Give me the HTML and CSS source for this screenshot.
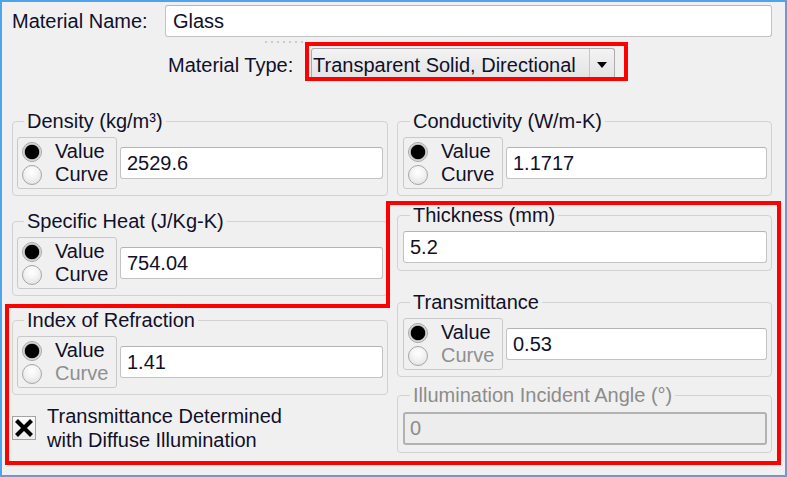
FILE: index.html
```html
<!DOCTYPE html>
<html>
<head>
<meta charset="utf-8">
<link rel="stylesheet" href="styles.css">
</head>
<body>
<div class="window">
  <div class="row1">
    <span class="label name-label">Material Name:</span>
    <div class="input name-input">Glass</div>
  </div>
  <div class="grip"></div>
  <div class="row2">
    <span class="label type-label">Material Type:</span>
    <div class="hl">
      <div class="select">
        <span class="select-text">Transparent Solid, Directional</span>
        <span class="select-btn"><svg width="10" height="6" viewBox="0 0 10 6"><path d="M0 0H10L5 6Z" fill="#000"/></svg></span>
      </div>
    </div>
  </div>

  <div class="grid">
    <div class="col col-left">
      <fieldset class="group g-density">
        <legend>Density (kg/m³)</legend>
        <div class="frow">
          <div class="radios">
            <div class="opt"><span class="radio on"></span>Value</div>
            <div class="opt"><span class="radio"></span>Curve</div>
          </div>
          <div class="input">2529.6</div>
        </div>
      </fieldset>
      <fieldset class="group g-heat">
        <legend>Specific Heat (J/Kg-K)</legend>
        <div class="frow">
          <div class="radios">
            <div class="opt"><span class="radio on"></span>Value</div>
            <div class="opt"><span class="radio"></span>Curve</div>
          </div>
          <div class="input">754.04</div>
        </div>
      </fieldset>
      <fieldset class="group g-index">
        <legend>Index of Refraction</legend>
        <div class="frow">
          <div class="radios">
            <div class="opt"><span class="radio on"></span>Value</div>
            <div class="opt disabled"><span class="radio"></span>Curve</div>
          </div>
          <div class="input">1.41</div>
        </div>
      </fieldset>
      <div class="checkrow">
        <span class="check"><svg width="22" height="22" viewBox="0 0 22 22"><path d="M3.5 3.5L18.5 18.5M18.5 3.5L3.5 18.5" stroke="#000" stroke-width="4.2" fill="none"/></svg></span>
        <span class="checktext">Transmittance Determined<br>with Diffuse Illumination</span>
      </div>
    </div>

    <div class="col col-right">
      <fieldset class="group g-cond">
        <legend>Conductivity (W/m-K)</legend>
        <div class="frow">
          <div class="radios">
            <div class="opt"><span class="radio on"></span>Value</div>
            <div class="opt"><span class="radio"></span>Curve</div>
          </div>
          <div class="input">1.1717</div>
        </div>
      </fieldset>
      <fieldset class="group g-thick">
        <legend>Thickness (mm)</legend>
        <div class="input">5.2</div>
      </fieldset>
      <fieldset class="group g-trans">
        <legend>Transmittance</legend>
        <div class="frow">
          <div class="radios">
            <div class="opt"><span class="radio on"></span>Value</div>
            <div class="opt disabled"><span class="radio"></span>Curve</div>
          </div>
          <div class="input">0.53</div>
        </div>
      </fieldset>
      <fieldset class="group g-illum disabled-group">
        <legend>Illumination Incident Angle (°)</legend>
        <div class="input input-disabled">0</div>
      </fieldset>
    </div>
  </div>

  <svg class="annot" width="787" height="477" viewBox="0 0 787 477">
    <path d="M7 306H388V203H779V463H7Z" fill="none" stroke="#ff0000" stroke-width="4"/>
  </svg>
</div>
</body>
</html>
```

FILE: styles.css
```css
html, body {
  margin: 0;
  padding: 0;
  background: #f0f0f0;
}

body {
  font-family: "Liberation Sans", Arial, sans-serif;
  font-size: 20px;
  color: #10102a;
}

.window {
  position: relative;
  box-sizing: border-box;
  width: 787px;
  height: 477px;
  border: 2px solid #4ea3ec;
  background: #f0f0f0;
  overflow: hidden;
}

.label {
  line-height: 22px;
  white-space: nowrap;
}

.input {
  box-sizing: border-box;
  height: 32px;
  background: #ffffff;
  border: 1px solid #c3c3c3;
  border-top-color: #b4b4b4;
  border-radius: 3px;
  padding: 0 6px;
  line-height: 30px;
  white-space: nowrap;
  overflow: hidden;
}

/* top rows */
.row1 {
  display: flex;
  align-items: center;
  padding: 3px 13px 0 10px;
}

.name-label {
  flex: 0 0 153px;
}

.name-input {
  flex: 1;
  padding-left: 7px;
}

.grip {
  width: 40px;
  height: 2px;
  margin: 4px 0 0 263px;
  background: repeating-linear-gradient(90deg, #cacaca 0 2px, transparent 2px 6px);
}

.row2 {
  display: flex;
  align-items: flex-start;
  margin-top: -1px;
  padding-left: 166px;
}

.type-label {
  flex: 0 0 137px;
  margin-top: 12px;
}

.hl {
  border: 4px solid #ff0000;
  padding: 2px 9px 0 2px;
}

.select {
  box-sizing: border-box;
  width: 304px;
  height: 29px;
  display: flex;
  border: 1px solid #acacac;
  border-bottom: none;
  border-radius: 3px 3px 0 0;
  background: linear-gradient(#f3f3f3, #e4e4e4);
}

.select-text {
  flex: 1;
  padding: 5px 0 0 1px;
  line-height: 22px;
  white-space: nowrap;
}

.select-btn {
  box-sizing: border-box;
  width: 25px;
  border-left: 1px solid #c6c6c6;
  display: flex;
  justify-content: center;
  padding-top: 13px;
}

.select-btn svg {
  display: block;
}

/* grid of groups */
.grid {
  display: grid;
  grid-template-columns: 376px 375px;
  column-gap: 9px;
  padding-left: 10px;
  margin-top: 30px;
}

.col {
  display: flex;
  flex-direction: column;
}

.group {
  margin: 0;
  min-width: 0;
  border: 1px solid #d2d2d2;
  border-radius: 4px;
  padding: 6px 4px 6px 4px;
}

.col-right .group {
  padding-left: 5px;
}

.group legend {
  padding: 0 3px;
  margin-left: 7px;
  line-height: 20px;
  white-space: nowrap;
}

.frow {
  display: flex;
  align-items: center;
  gap: 3px;
}

.frow .input {
  flex: 1;
}

.radios {
  box-sizing: border-box;
  flex: 0 0 100px;
  height: 52px;
  border: 1px solid #c9c9c9;
  border-radius: 3px;
  padding: 2px 0 2px 4px;
}

.opt {
  display: flex;
  align-items: center;
  height: 23px;
  line-height: 23px;
  white-space: nowrap;
}

.opt.disabled {
  color: #8f8f8f;
}

.radio {
  box-sizing: border-box;
  flex: 0 0 20px;
  width: 20px;
  height: 20px;
  margin-right: 13px;
  border-radius: 50%;
  border: 1px solid #a6a6a6;
  background: radial-gradient(circle at 50% 35%, #ffffff 0, #f4f4f4 40%, #dcdcdc 100%);
}

.radio.on {
  background: radial-gradient(circle, #000000 0 6.8px, #bdbdbd 7.6px, #dedede 8.6px, #ececec 10px);
}

.g-heat {
  margin-top: 15px;
}

.g-index {
  margin-top: 14px;
}

.g-thick {
  margin-top: 9px;
  padding-bottom: 7px;
}

.g-trans {
  margin-top: 21px;
}

.g-illum {
  margin-top: 8px;
  padding-top: 7px;
  padding-bottom: 7px;
}

.disabled-group legend {
  color: #8c8c8c;
}

.input-disabled {
  height: 33px;
  background: #ededed;
  border: 2px solid #b2b2b2;
  color: #8c8c8c;
  padding-left: 5px;
  line-height: 29px;
}

/* checkbox */
.checkrow {
  display: flex;
  align-items: center;
  margin-top: 9px;
}

.check {
  box-sizing: border-box;
  width: 24px;
  height: 24px;
  flex: 0 0 24px;
  border: 1px solid #a3a3a3;
  background: linear-gradient(#fbfbfb, #ececec);
  display: flex;
  align-items: center;
  justify-content: center;
}

.check svg {
  display: block;
}

.checktext {
  margin-left: 11px;
  line-height: 24px;
}

/* annotation overlay */
.annot {
  position: absolute;
  left: -2px;
  top: -2px;
  pointer-events: none;
}
```
